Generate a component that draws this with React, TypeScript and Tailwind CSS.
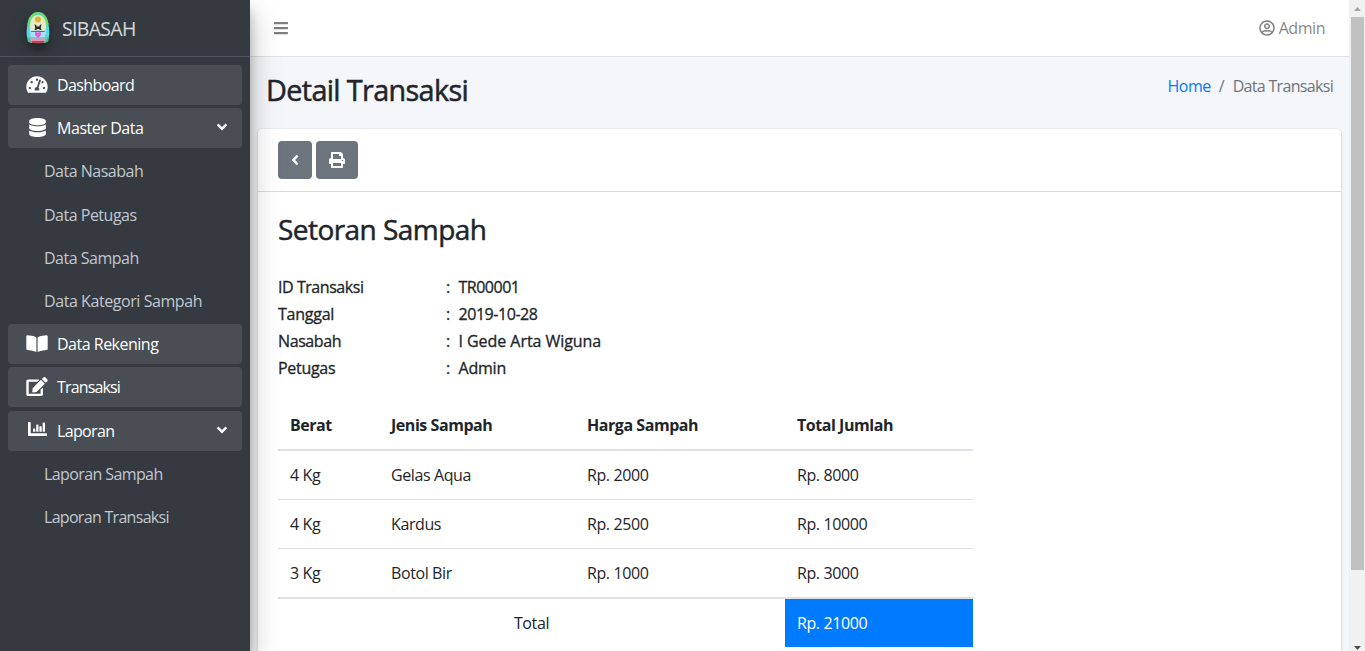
import type { ReactNode } from "react";
import {
  FaAngleDown,
  FaAngleLeft,
  FaBars,
  FaBookOpen,
  FaDatabase,
  FaEdit,
  FaPrint,
  FaRegUserCircle,
  FaTachometerAlt,
} from "react-icons/fa";

function Emblem() {
  return (
    <svg viewBox="0 0 24 33" className="h-[33px] w-6">
      <path d="M2 28.500C.5 25 .2 21 1.500 14 2.500 5 7 1 12 1s9.500 4 10.500 13c1.300 7 1 11-.5 14.500z" fill="#5ad3e2" />
      <path d="M2.500 14C3.500 6 7.500 2.200 12 2.200S20.500 6 21.500 14" fill="none" stroke="#6be04d" strokeWidth="2.400" strokeDasharray="1.600 .5" />
      <path d="M4 15C4 8 7.200 4 12 4s8 4 8 11-2.500 11-8 11-8-4-8-11z" fill="#e6e9c6" />
      <path d="M3.500 19.500h17L19 26H5z" fill="#a5e2f3" />
      <circle cx="12" cy="8.500" r="3" fill="#dbb52f" />
      <circle cx="12" cy="8.500" r="1.200" fill="#f2a52a" />
      <path d="M8.500 13l2 1.500v4.500h-2l.8-2zM15.500 13l-2 1.500v4.500h2l-.8-2zM10.500 15.500h3V18h-3zM5 20.500l7-.8 7 .8v.6l-7-.6-7 .6z" fill="#22251f" />
      <path d="M9 21.500l1.500-.7L12 22l1.500-1.200 1.500.7v2.500L12 27l-3-3z" fill="#e35fd6" />
      <path d="M.8 25l4 3h14.400l4-3-1 5.500-3 1.500H4.800l-3-1.500z" fill="#3fc58e" />
      <path d="M4.500 27.500h15l.5 2.500H4z" fill="#ee8fb8" />
      <path d="M6 30h12v1.800H6z" fill="#d9304a" />
    </svg>
  );
}

function BarsChart() {
  return (
    <svg viewBox="0 0 19 14" className="mb-[3px] h-[14px] w-[19px]" fill="currentColor">
      <path d="M.6 0h1.500q.6 0 .6.600v10.700h15.700q.6 0 .6.600v1.500q0 .6-.6.600H.6q-.6 0-.6-.6V.6Q0 0 .6 0z" />
      <rect x="5" y="6.500" width="2.300" height="3.300" rx=".4" />
      <rect x="8.200" y="2.500" width="2.300" height="7.300" rx=".4" />
      <rect x="11.400" y="4.200" width="2.300" height="5.600" rx=".4" />
      <rect x="14.700" y=".6" width="2.300" height="9.200" rx=".4" />
    </svg>
  );
}

function MenuItem({
  icon,
  label,
  open,
  tracking = "tracking-[-0.5px]",
}: {
  icon: ReactNode;
  label: string;
  open?: boolean;
  tracking?: string;
}) {
  return (
    <div className="mb-[3.2px] flex h-10 items-center rounded bg-white/10 pl-4 pr-3 text-white">
      <span className="flex w-[26px] justify-center">{icon}</span>
      <span className={"ml-[7px] flex-1 " + tracking}>{label}</span>
      {open && <FaAngleDown className="mb-0.5 size-4" />}
    </div>
  );
}

function SubItem({ label, tracking = "tracking-[-0.5px]" }: { label: string; tracking?: string }) {
  return <div className={"mb-[3.2px] flex h-10 items-center pl-9 text-[#c2c7d0] " + tracking}>{label}</div>;
}

const info = [
  ["ID Transaksi", "TR00001", "tracking-[-0.45px]", "tracking-[-0.5px]"],
  ["Tanggal", "2019-10-28", "tracking-[-0.25px]", "tracking-[-0.45px]"],
  ["Nasabah", "I Gede Arta Wiguna", "tracking-[-0.4px]", "tracking-[-0.05px]"],
  ["Petugas", "Admin", "tracking-[-0.3px]", "tracking-[-0.2px]"],
];

const rows = [
  ["4 Kg", "Gelas Aqua", "Rp. 2000", "Rp. 8000"],
  ["4 Kg", "Kardus", "Rp. 2500", "Rp. 10000"],
  ["3 Kg", "Botol Bir", "Rp. 1000", "Rp. 3000"],
];

function Sidebar() {
  return (
    <aside className="z-10 w-[250px] shrink-0 bg-[#343a40] shadow-[0_14px_28px_rgba(0,0,0,0.25),0_10px_10px_rgba(0,0,0,0.22)]">
      <div className="flex h-[57px] items-center border-b border-[#4b545c] pb-0.5 pl-[25.500px]">
        <span className="rounded-full shadow-[0_10px_20px_rgba(0,0,0,0.19),0_6px_6px_rgba(0,0,0,0.23)]">
          <Emblem />
        </span>
        <span className="ml-[12.500px] mt-1 text-[19.500px] tracking-[-0.7px] text-white/80">SIBASAH</span>
      </div>
      <nav className="px-2 pt-2">
        <MenuItem icon={<FaTachometerAlt className="mb-0.5 h-[19px] w-[22px]" />} label="Dashboard" tracking="tracking-[-0.6px]" />
        <MenuItem icon={<FaDatabase className="mb-0.5 size-[19px]" />} label="Master Data" tracking="tracking-[-0.45px]" open />
        <SubItem label="Data Nasabah" />
        <SubItem label="Data Petugas" />
        <SubItem label="Data Sampah" />
        <SubItem label="Data Kategori Sampah" tracking="tracking-[-0.43px]" />
        <MenuItem icon={<FaBookOpen className="mb-0.5 h-[19px] w-[22px]" />} label="Data Rekening" />
        <MenuItem icon={<FaEdit className="mb-0.5 h-[19px] w-[22px]" />} label="Transaksi" tracking="tracking-[-0.85px]" />
        <MenuItem icon={<BarsChart />} label="Laporan" tracking="tracking-[-0.65px]" open />
        <SubItem label="Laporan Sampah" tracking="tracking-[-0.6px]" />
        <SubItem label="Laporan Transaksi" tracking="tracking-[-0.7px]" />
      </nav>
    </aside>
  );
}

function Scrollbar() {
  return (
    <div className="flex h-full w-4 shrink-0 flex-col items-center bg-[#f1f1f1]">
      <svg viewBox="0 0 16 17" className="h-[17px] w-4">
        <path d="M5 11h7L8.500 7z" fill="#a3a3a3" />
      </svg>
      <div className="ml-px h-[553px] w-[13px] bg-[#c1c1c1]" />
      <svg viewBox="0 0 16 17" className="mt-auto h-[17px] w-4">
        <path d="M5 12h7L8.500 16z" fill="#505050" />
      </svg>
    </div>
  );
}

export default function App() {
  return (
    <div className="flex h-[651px] w-[1365px] overflow-hidden bg-[#f4f6f9] font-['Open_Sans','Noto_Sans',sans-serif] text-[16px] leading-6 text-[#212529]">
      <Sidebar />
      <div className="flex min-w-0 flex-1 flex-col">
        <header className="flex h-[57px] shrink-0 items-center justify-between border-b border-[#dee2e6] bg-white pl-[23px] pr-6 text-black/50">
          <FaBars className="size-4" />
          <div className="flex items-center gap-1">
            <FaRegUserCircle className="size-4" />
            <span className="tracking-[-0.45px]">Admin</span>
          </div>
        </header>
        <div className="flex h-[72px] shrink-0 justify-between pl-4 pr-4 pt-4">
          <h1 className="text-[28.800px] leading-[34px] tracking-[-0.65px] [-webkit-text-stroke:0.5px]">Detail Transaksi</h1>
          <div className="flex h-6 gap-2 pt-px text-[#6c757d]">
            <a className="tracking-[-0.5px] text-[#007bff]">Home</a>
            <span>/</span>
            <span className="tracking-[-0.68px]">Data Transaksi</span>
          </div>
        </div>
        <main className="mx-2 h-[560px] rounded-t bg-white shadow-[0_0_1px_rgba(0,0,0,0.125),0_1px_3px_rgba(0,0,0,0.2)]">
          <div className="flex h-[63px] gap-1 border-b border-black/15 pl-5 pt-3 text-white">
            <button className="flex h-[38px] w-[34px] items-center justify-center rounded bg-[#6c757d]">
              <FaAngleLeft className="size-4" />
            </button>
            <button className="flex h-[38px] w-[42px] items-center justify-center rounded bg-[#6c757d]">
              <FaPrint className="size-4" />
            </button>
          </div>
          <div className="px-5 pt-5">
            <h2 className="text-[28px] leading-[34px] tracking-[-0.55px] [-webkit-text-stroke:0.5px]">Setoran Sampah</h2>
            <div className="pt-[27px] [-webkit-text-stroke:0.3px]">
              {info.map(([label, value, labelTracking, valueTracking]) => (
                <div key={label} className="flex h-[27px] items-center">
                  <span className={"w-[168px] " + labelTracking}>{label}</span>
                  <span className="w-[12.500px]">:</span>
                  <span className={valueTracking}>{value}</span>
                </div>
              ))}
            </div>
            <div className="mt-5 w-[695px]">
              <div className="grid h-[50px] grid-cols-[101px_196px_210px_188px] items-center border-b-2 border-[#dee2e6] font-bold tracking-[-0.45px]">
                {["Berat", "Jenis Sampah", "Harga Sampah", "Total Jumlah"].map((h) => (
                  <span key={h} className="pl-3">{h}</span>
                ))}
              </div>
              {rows.map((row, i) => (
                <div
                  key={i}
                  className="box-content grid h-12 grid-cols-[101px_196px_210px_188px] items-center border-b border-[#dee2e6] tracking-[-0.4px] [&:nth-child(4)]:border-b-2"
                >
                  {row.map((cell, j) => (
                    <span key={j} className="pl-3">{cell}</span>
                  ))}
                </div>
              ))}
              <div className="grid h-12 grid-cols-[507px_188px] tracking-[-0.4px]">
                <span className="self-center text-center">Total</span>
                <span className="flex items-center bg-[#007bff] pl-3 text-white">Rp. 21000</span>
              </div>
            </div>
          </div>
        </main>
      </div>
      <Scrollbar />
    </div>
  );
}
